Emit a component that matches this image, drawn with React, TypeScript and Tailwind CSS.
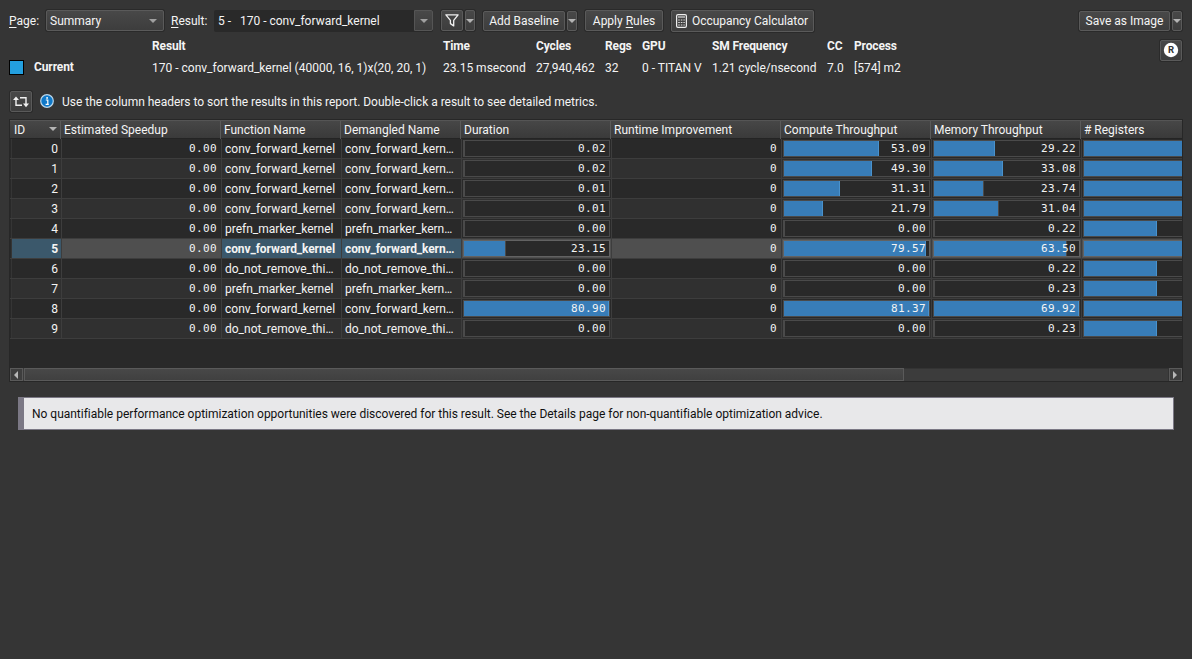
import React from "react";

const ROBOTO = "font-['Roboto','Liberation_Sans',sans-serif]";
const MONO =
  "font-['DejaVu_Sans_Mono','Liberation_Mono',monospace] text-[11px] tracking-[0.38px]";

const BTN =
  "flex items-center justify-center rounded-[2px] border border-[#5a5a5a] bg-linear-to-b from-[#484848] to-[#3d3d3d] shadow-[0_0_0_1px_#2a2a2a]";

function Arrow({ color = "#b4b4b4" }: { color?: string }) {
  return (
    <svg width="8" height="4" viewBox="0 0 8 4" className="shrink-0">
      <path d="M0 0H8L4 4Z" fill={color} />
    </svg>
  );
}

function ArrowButton({ className = "" }: { className?: string }) {
  return (
    <button className={`${BTN} w-[10px] ${className}`}>
      <Arrow />
    </button>
  );
}

function Toolbar() {
  return (
    <div className="flex h-[21px] items-center pl-[9px] pr-[10px]">
      <span className="w-[37px]">
        <u className="underline-offset-2">P</u>age:
      </span>
      <div className={`${BTN} h-[21px] w-[118px] pl-[3px] pr-[6px]`}>
        <span className="flex-1">Summary</span>
        <Arrow color="#a0a0a0" />
      </div>
      <span className="ml-[7px] w-[43px]">
        <u className="underline-offset-2">R</u>esult:
      </span>
      <div className="flex h-[22px] w-[219px] items-center rounded-[2px] bg-[#292929]">
        <span className="flex-1 whitespace-pre pl-[4px]">5 -   170 - conv_forward_kernel</span>
        <div className="flex h-[21px] w-[19px] items-center justify-center rounded-r-[2px] border border-[#555] bg-linear-to-b from-[#484848] to-[#3d3d3d]">
          <Arrow color="#a0a0a0" />
        </div>
      </div>
      <button className={`${BTN} ml-[8px] h-[21px] w-[22px]`}>
        <svg width="14" height="13" viewBox="0 0 14 13" fill="none">
          <path
            d="M0.9 0.8H13.1L8.7 6.4V11.9L5.4 9.6V6.4Z"
            stroke="#f0f0f0"
            strokeWidth="1.3"
            strokeLinejoin="round"
          />
        </svg>
      </button>
      <ArrowButton className="ml-[2px] h-[21px]" />
      <button className={`${BTN} ml-[8px] h-[20px] w-[82px] self-end`}>Add Baseline</button>
      <ArrowButton className="ml-[2px] h-[20px] self-end" />
      <button className={`${BTN} ml-[8px] h-[21px] w-[78px]`}>
        <span>
          Apply <u className="underline-offset-2">R</u>ules
        </span>
      </button>
      <button className={`${BTN} -mb-[1px] ml-[8px] h-[22px] w-[143px] pr-[1px] tracking-[-0.03px]`}>
        <svg width="11" height="14" viewBox="0 0 11 14" fill="none" className="mr-[5px]">
          <rect x="0.6" y="0.6" width="9.8" height="12.8" rx="1.4" stroke="#eee" strokeWidth="1.2" />
          <path d="M2 3H9" stroke="#ddd" strokeWidth="1.2" />
          <path
            d="M2.2 6H8.8M2.2 8.5H8.8M2.2 11H8.8"
            stroke="#ddd"
            strokeWidth="1.2"
            strokeDasharray="1.6 1"
          />
        </svg>
        Occupancy Calculator
      </button>
      <div className="flex-1" />
      <button className={`${BTN} h-[20px] w-[91px] self-end`}>Save as Image</button>
      <ArrowButton className="ml-[2px] h-[20px] self-end" />
    </div>
  );
}

const INFO = [
  { head: "Result", value: "170 - conv_forward_kernel (40000, 16, 1)x(20, 20, 1)", w: "w-[291px]" },
  { head: "Time", value: "23.15 msecond", w: "w-[93px]" },
  { head: "Cycles", value: "27,940,462", w: "w-[69px]" },
  { head: "Regs", value: "32", w: "w-[37px]" },
  { head: "GPU", value: "0 - TITAN V", w: "w-[70px]" },
  { head: "SM Frequency", value: "1.21 cycle/nsecond", w: "w-[115px]" },
  { head: "CC", value: "7.0", w: "w-[27px]" },
  { head: "Process", value: "[574] m2", w: "w-[60px]" },
];

function ResultInfo() {
  return (
    <div className="flex h-[60px] pl-[9px] pr-[10px]">
      <div className="flex w-[143px] pt-[26px]">
        <div className="mt-[3px] size-[15px] border border-black bg-[#239fdf]" />
        <b className="ml-[10px] leading-[20px] tracking-[-0.1px]">Current</b>
      </div>
      {INFO.map((c) => (
        <div key={c.head} className={`${c.w} flex flex-col pt-[6px]`}>
          <b className="h-[22px] leading-[18px] tracking-[-0.14px]">{c.head}</b>
          <span className="whitespace-nowrap leading-[18px]">{c.value}</span>
        </div>
      ))}
      <div className="flex-1" />
      <button className={`${BTN} mt-[9px] h-[21px] w-[22px]`}>
        <svg width="16" height="16" viewBox="0 0 16 16" className="-mt-[1px]">
          <circle cx="8" cy="8" r="7.2" fill="#fff" />
          <text x="8" y="11.4" textAnchor="middle" fontSize="9.5" fontWeight="700" fill="#333">
            R
          </text>
        </svg>
      </button>
    </div>
  );
}

function HintRow() {
  return (
    <div className="flex h-[21px] items-center pl-[10px]">
      <button className={`${BTN} h-[21px] w-[22px]`}>
        <svg width="16" height="12" viewBox="0 0 16 12" fill="none" stroke="#f0f0f0" strokeWidth="1.4">
          <path d="M3 3V9.3H9M7 1.7H13V9" />
          <path d="M0 4L3 0.4L6 4Z" fill="#f0f0f0" stroke="none" />
          <path d="M10 7.5L13 11.3L16 7.5Z" fill="#f0f0f0" stroke="none" />
        </svg>
      </button>
      <svg width="14" height="14" viewBox="0 0 14 14" className="-mt-px ml-[8px]">
        <circle cx="7" cy="7" r="6.3" fill="#0f78c8" stroke="#bcd8ec" strokeWidth="1.2" />
        <circle cx="7.1" cy="3.9" r="0.95" fill="#fff" />
        <path d="M5.8 6H7.8V10.2M5.6 10.3H8.8" stroke="#fff" strokeWidth="1.2" fill="none" />
      </svg>
      <span className="ml-[8px] self-start leading-[22px] tracking-[-0.017px]">
        Use the column headers to sort the results in this report. Double-click a result to see
        detailed metrics.
      </span>
    </div>
  );
}

type Bar = { text: string; fill: number; dim?: boolean };
type Row = { name: string; short: string; dur: Bar; comp: Bar; mem: Bar; reg: number };

const b = (text: string, fill: number, dim = false): Bar => ({ text, fill, dim });
const CONV = { name: "conv_forward_kernel", short: "conv_forward_kern…" };
const PREFN = { name: "prefn_marker_kernel", short: "prefn_marker_kern…" };
const DONOT = { name: "do_not_remove_thi…", short: "do_not_remove_thi…" };

const ROWS: Row[] = [
  { ...CONV, dur: b("0.02", 0), comp: b("53.09", 95), mem: b("29.22", 61), reg: 99 },
  { ...CONV, dur: b("0.02", 0), comp: b("49.30", 88), mem: b("33.08", 69), reg: 99 },
  { ...CONV, dur: b("0.01", 0), comp: b("31.31", 56), mem: b("23.74", 50, true), reg: 99 },
  { ...CONV, dur: b("0.01", 0), comp: b("21.79", 39), mem: b("31.04", 65, true), reg: 99 },
  { ...PREFN, dur: b("0.00", 0), comp: b("0.00", 0), mem: b("0.22", 0), reg: 73 },
  { ...CONV, dur: b("23.15", 42, true), comp: b("79.57", 142), mem: b("63.50", 133, true), reg: 99 },
  { ...DONOT, dur: b("0.00", 0), comp: b("0.00", 0), mem: b("0.22", 0), reg: 73 },
  { ...PREFN, dur: b("0.00", 0), comp: b("0.00", 0), mem: b("0.23", 0), reg: 73 },
  { ...CONV, dur: b("80.90", 145), comp: b("81.37", 145), mem: b("69.92", 145), reg: 99 },
  { ...DONOT, dur: b("0.00", 0), comp: b("0.00", 0), mem: b("0.23", 0), reg: 73 },
];

const COLS = "grid grid-cols-[52px_160px_120px_120px_150px_170px_150px_150px_100px]";

const HEADERS = [
  "ID",
  "Estimated Speedup",
  "Function Name",
  "Demangled Name",
  "Duration",
  "Runtime Improvement",
  "Compute Throughput",
  "Memory Throughput",
  "# Registers",
];

function BarCell({ text, fill, dim, selected, open }: Bar & { selected: boolean; open?: boolean }) {
  return (
    <div className={`flex border-[#3d3d3d] pl-px pt-px ${open ? "" : "border-r pr-px"}`}>
      <div
        className={`relative h-[17px] flex-1 border bg-[#292929] ${
          selected ? "border-[#626262]" : "border-[#4a4a4a]"
        } ${open ? "border-r-0" : ""}`}
      >
        <div
          className={`h-[15px] max-w-full border-r ${fill ? "bg-[#387db8]" : ""} ${
            fill && !dim ? "border-[#4a92cc]" : "border-[#4a4a4a]"
          }`}
          style={{ width: fill || 1 }}
        />
        <span className={`absolute right-[3px] top-0 leading-[16px] ${MONO}`}>{text}</span>
      </div>
    </div>
  );
}

function DataRow({ row, id }: { row: Row; id: number }) {
  const selected = id === 5;
  const cell = "border-r border-[#3d3d3d]";
  const accent = selected ? "bg-[#3b586b] font-bold tracking-[-0.1px]" : "";
  const bg = selected ? "bg-[#4f4f4f]" : id % 2 ? "bg-[#303030]" : "bg-[#292929]";
  return (
    <div className={`${COLS} h-[20px] border-b border-[#3d3d3d] leading-[20px] ${bg}`}>
      <div className="flex h-[19px]">
        <div className="w-[2px] border-r border-[#353535] bg-[#292929]" />
        <div className={`${cell} ${accent} flex-1 pr-[3px] text-right`}>{id}</div>
      </div>
      <div className={`${cell} ${MONO} h-[19px] pr-[4px] text-right leading-[20px]`}>0.00</div>
      <div className={`${cell} ${accent} h-[19px] overflow-hidden whitespace-nowrap pl-[3px]`}>
        {row.name}
      </div>
      <div className={`${cell} ${accent} h-[19px] overflow-hidden whitespace-nowrap pl-[3px]`}>
        {row.short}
      </div>
      <BarCell {...row.dur} selected={selected} />
      <div className={`${cell} ${MONO} h-[19px] pr-[4px] text-right leading-[20px]`}>0</div>
      <BarCell {...row.comp} selected={selected} />
      <BarCell {...row.mem} selected={selected} />
      <BarCell text="" fill={row.reg} selected={selected} open />
    </div>
  );
}

function ResultsTable() {
  return (
    <div className="ml-[9px] mt-[7px] flex h-[263px] w-[1174px] flex-col overflow-hidden border border-[#272727] bg-[#292929]">
      <div
        className={`${COLS} h-[19px] border-b border-t border-b-[#242424] border-t-[#555] bg-linear-to-b from-[#474747] to-[#3a3a3a] leading-[18px]`}
      >
        {HEADERS.map((h, i) => (
          <div
            key={h}
            className={`flex items-center justify-between whitespace-nowrap border-[#5a5a5a] ${
              i === 0 ? "w-[51px] border-r pl-[4px] pr-[3px]" : ""
            } ${i > 0 && i < 8 ? "-ml-px mr-px border-r pl-[3px]" : ""} ${i === 8 ? "pl-[2px]" : ""}`}
          >
            {h}
            {i === 0 && (
              <span className="-mt-[3px] flex">
                <Arrow />
              </span>
            )}
          </div>
        ))}
      </div>
      <div className="flex-1">
        {ROWS.map((row, i) => (
          <DataRow key={i} row={row} id={i} />
        ))}
      </div>
      <div className="flex h-[13px] bg-[#3c3c3c]">
        <div className="flex w-[13px] items-center border border-[#5a5a5a] bg-[#3e3e3e] pl-[3px]">
          <svg width="4" height="8" viewBox="0 0 4 8">
            <path d="M4 0V8L0 4Z" fill="#b8b8b8" />
          </svg>
        </div>
        <div className="ml-[1px] w-[880px] border border-[#5a5a5a] bg-linear-to-b from-[#484848] to-[#404040]" />
        <div className="flex-1 border-r border-t border-[#333]" />
        <div className="flex w-[13px] items-center border border-[#5a5a5a] bg-[#3e3e3e] pl-[3px]">
          <svg width="4" height="8" viewBox="0 0 4 8">
            <path d="M0 0V8L4 4Z" fill="#b8b8b8" />
          </svg>
        </div>
      </div>
    </div>
  );
}

export default function App() {
  return (
    <div
      className={`${ROBOTO} h-[659px] w-[1192px] overflow-hidden bg-[#353535] pt-[10px] text-[12px] text-[#f4f4f4]`}
    >
      <Toolbar />
      <ResultInfo />
      <HintRow />
      <ResultsTable />
      <div className="ml-[18px] mt-[15px] flex h-[33px] w-[1156px] items-center whitespace-nowrap border border-l-[6px] border-[#7b7885] bg-[#e8e8ea] pl-[8px] tracking-[-0.016px] text-[#101010]">
        No quantifiable performance optimization opportunities were discovered for this result. See
        the Details page for non-quantifiable optimization advice.
      </div>
    </div>
  );
}
